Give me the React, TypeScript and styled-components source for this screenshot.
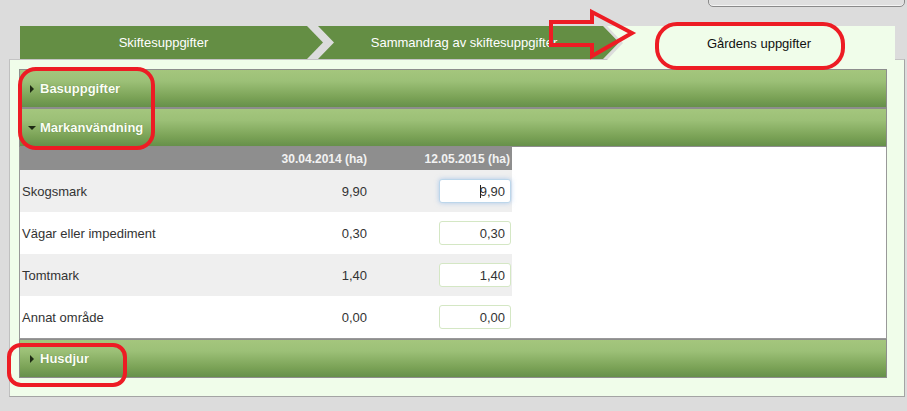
import React from "react";
import styled, { createGlobalStyle, css } from "styled-components";

const Global = createGlobalStyle`
  html, body { margin: 0; padding: 0; background: #dcdcdc; }
  body { font-family: "Liberation Sans", Arial, sans-serif; width: 907px; height: 411px; overflow: hidden; }
  * { box-sizing: border-box; }
`;

const Page = styled.div`
  position: relative;
  width: 907px;
  height: 411px;
  padding-left: 9px;
`;

const TopBar = styled.div`
  height: 26px;
  display: flex;
  justify-content: flex-end;
  padding-right: 2px;
`;

const TopButton = styled.div`
  width: 197px;
  height: 27px;
  margin-top: -20px;
  border: 1px solid #8a8a8a;
  border-radius: 5px;
  background: #dfdfdf;
  box-shadow: inset 0 -1px 0 #f4f4f4;
`;

const TabBar = styled.div`
  position: relative;
  z-index: 1;
  display: flex;
  height: 34px;
  margin-left: 11px;
  margin-bottom: -1px;
`;

const Tab = styled.div<{ $first?: boolean; $active?: boolean; $w: number; $ml: number; $pr: number }>`
  width: ${(p) => p.$w}px;
  margin-left: ${(p) => p.$ml}px;
  padding-right: ${(p) => p.$pr}px;
  padding-left: ${(p) => (p.$first ? 0 : 16)}px;
  display: flex;
  align-items: center;
  justify-content: center;
  font-size: 13px;
  white-space: nowrap;
  overflow: hidden;
  ${(p) =>
    p.$active
      ? css`
          background: #f0fdea;
          color: #111;
          clip-path: polygon(0 0, 100% 0, 100% 100%, 0 100%, 16px 50%);
        `
      : css`
          background: #648e44;
          color: #fff;
          height: 33px;
          clip-path: ${p.$first
            ? "polygon(0 0, calc(100% - 16px) 0, 100% 50%, calc(100% - 16px) 100%, 0 100%)"
            : "polygon(0 0, calc(100% - 16px) 0, 100% 50%, calc(100% - 16px) 100%, 0 100%, 16px 50%)"};
        `}
`;

const Panel = styled.div`
  width: 896px;
  height: 338px;
  background: #f0fdea;
  border: 1px solid #a4a4a4;
  border-top-color: #c4c4c4;
  border-left-color: #c0c0c0;
  padding: 9px 17px 17px 9px;
  display: flex;
  flex-direction: column;
`;

const SectionHeader = styled.div`
  height: 39px;
  border: 1px solid #8d8d8d;
  background: linear-gradient(#a4c67d, #9cc077 30%, #7aa256 75%, #66904a);
  display: flex;
  align-items: center;
  padding-left: 8px;
  gap: 6px;
  color: #fbfff5;
  font-weight: bold;
  font-size: 13px;
  text-shadow: 0 0 1px rgba(40, 70, 20, 0.5);
`;

const Caret = styled.span<{ $open?: boolean }>`
  width: 0;
  height: 0;
  ${(p) =>
    p.$open
      ? css`
          margin-right: -2px;
          border-left: 4px solid transparent;
          border-right: 4px solid transparent;
          border-top: 4px solid #1e2a14;
        `
      : css`
          margin-left: 2px;
          border-top: 4px solid transparent;
          border-bottom: 4px solid transparent;
          border-left: 4px solid #1e2a14;
        `}
`;

const Content = styled.div`
  background: #fff;
  border: 1px solid #999;
  border-top: none;
  height: 192px;
`;

const Table = styled.div`
  width: 493px;
  display: grid;
  grid-template-columns: 260px 87px 145px;
`;

const HeadCell = styled.div<{ $pr?: number }>`
  height: 23px;
  background: #8e8e8e;
  color: #f2f2f2;
  font-weight: bold;
  font-size: 12px;
  display: flex;
  align-items: center;
  justify-content: flex-end;
  padding-right: ${(p) => p.$pr ?? 0}px;
`;

const Cell = styled.div<{ $alt?: boolean; $right?: boolean }>`
  height: 42px;
  background: ${(p) => (p.$alt ? "#efefef" : "#fff")};
  display: flex;
  align-items: center;
  justify-content: ${(p) => (p.$right ? "flex-end" : "flex-start")};
  padding-left: ${(p) => (p.$right ? 0 : 2)}px;
  color: #333;
  font-size: 13px;
`;

const FieldWrap = styled.div`
  position: relative;
  margin-right: 1px;
  display: flex;
`;

const Field = styled.input<{ $focused?: boolean }>`
  width: 72px;
  height: 24px;
  border: 1px solid ${(p) => (p.$focused ? "#bcd6ea" : "#d4e7c4")};
  border-radius: 3px;
  background: #fff;
  text-align: right;
  padding: 0 5px 0 0;
  font-family: "Liberation Sans", Arial, sans-serif;
  font-size: 13px;
  color: #333;
  outline: none;
  box-shadow: ${(p) => (p.$focused ? "0 0 5px rgba(120, 170, 230, 0.55)" : "none")};
`;

const TextCaret = styled.span`
  position: absolute;
  left: 41px;
  top: 6px;
  width: 1px;
  height: 13px;
  background: #222;
`;

const Overlay = styled.svg`
  position: absolute;
  z-index: 2;
  left: 0;
  top: 0;
  pointer-events: none;
`;

const rows = [
  { label: "Skogsmark", old: "9,90", val: "9,90", focused: true },
  { label: "Vägar eller impediment", old: "0,30", val: "0,30" },
  { label: "Tomtmark", old: "1,40", val: "1,40" },
  { label: "Annat område", old: "0,00", val: "0,00" },
];

export default function App() {
  return (
    <Page>
      <Global />
      <TopBar>
        <TopButton />
      </TopBar>
      <TabBar>
        <Tab $first $w={303} $ml={0} $pr={16}>Skiftesuppgifter</Tab>
        <Tab $w={301} $ml={-5} $pr={25}>Sammandrag av skiftesuppgifter</Tab>
        <Tab $active $w={288} $ml={-12} $pr={0}>Gårdens uppgifter</Tab>
      </TabBar>
      <Panel>
        <SectionHeader>
          <Caret />
          Basuppgifter
        </SectionHeader>
        <SectionHeader>
          <Caret $open />
          Markanvändning
        </SectionHeader>
        <Content>
          <Table>
            <HeadCell />
            <HeadCell>30.04.2014 (ha)</HeadCell>
            <HeadCell $pr={2}>12.05.2015 (ha)</HeadCell>
            {rows.map((r, i) => (
              <React.Fragment key={r.label}>
                <Cell $alt={i % 2 === 0}>{r.label}</Cell>
                <Cell $alt={i % 2 === 0} $right>{r.old}</Cell>
                <Cell $alt={i % 2 === 0} $right>
                  <FieldWrap>
                    <Field $focused={r.focused} defaultValue={r.val} readOnly />
                    {r.focused && <TextCaret />}
                  </FieldWrap>
                </Cell>
              </React.Fragment>
            ))}
          </Table>
        </Content>
        <SectionHeader>
          <Caret />
          Husdjur
        </SectionHeader>
      </Panel>
      <Overlay width={907} height={411} viewBox="0 0 907 411">
        <g fill="none" stroke="#ed1c24" strokeWidth={4}>
          <rect x={20} y={69} width={133} height={79} rx={16} />
          <rect x={657} y={24} width={186} height={44} rx={20} />
          <rect x={9} y={345} width={116} height={40} rx={12} />
          <polygon points="551,22 592,22 592,12 632,33 592,56 592,45 551,45" />
        </g>
      </Overlay>
    </Page>
  );
}
